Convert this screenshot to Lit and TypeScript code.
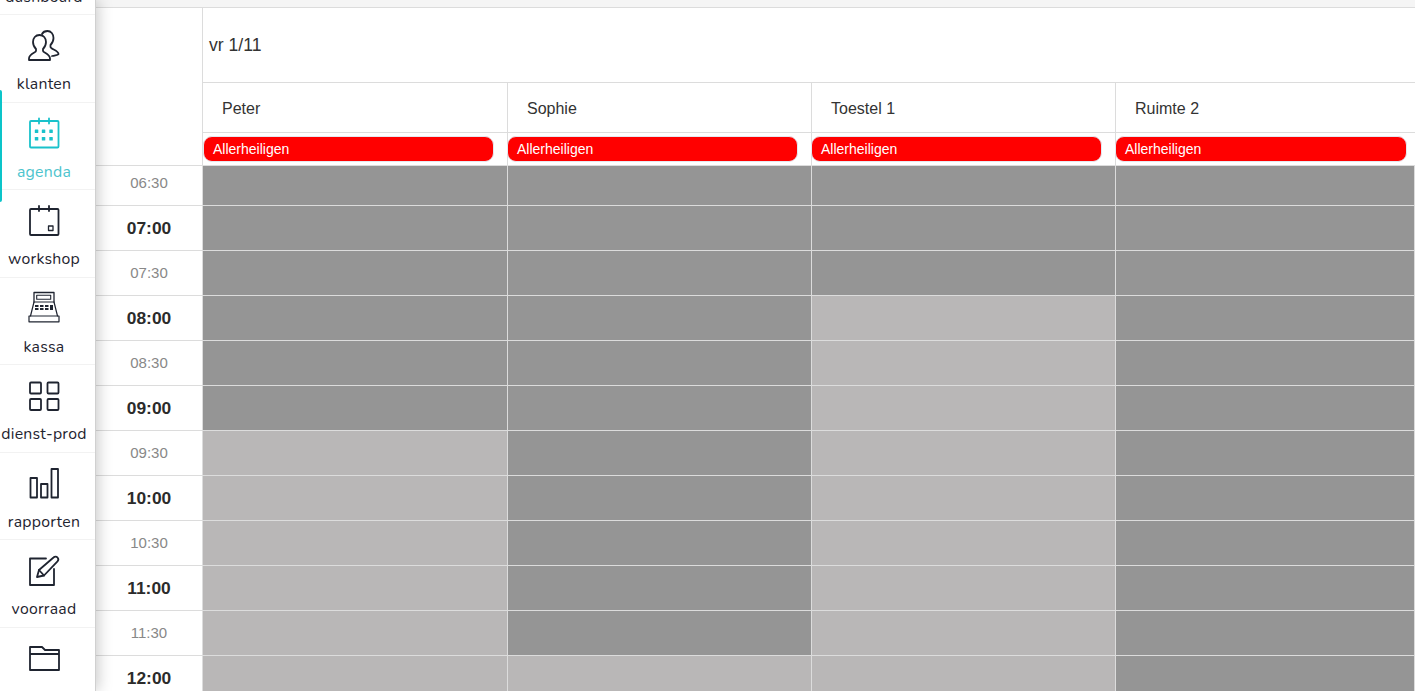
import { LitElement, html, css, svg } from "lit";
import { customElement } from "lit/decorators.js";

const icons: Record<string, unknown> = {
  dashboard: svg``,
  klanten: svg`<path d="M11.500 5C7.500 5 5 8 5 12c0 3 1.500 5.500 3 7v2c0 1.500-7 3-7 7.500V30h21v-1.500c0-4.500-7-6-7-7.500v-2c1.500-1.500 3-4 3-7 0-4-2.500-7-6.500-7z"/><path d="M14 4c1-2 3-3 5.500-3 3.500 0 6 3 6 7 0 3-1.500 5.500-3 7v2c0 2 8 3.500 8 7 0 1-2.500 1-6.500 2"/>`,
  agenda: svg`<rect x="2" y="3" width="28.500" height="26.500" rx="1"/><path d="M11 .5v5M21 .5v5"/><g fill="currentColor" stroke="none"><rect x="6.800" y="11.500" width="3.500" height="3.500" rx=".6"/><rect x="13.800" y="11.500" width="3.500" height="3.500" rx=".6"/><rect x="21.300" y="11.500" width="3.500" height="3.500" rx=".6"/><rect x="6.800" y="19" width="3.500" height="3.500" rx=".6"/><rect x="13.800" y="19" width="3.500" height="3.500" rx=".6"/><rect x="21.300" y="19" width="3.500" height="3.500" rx=".6"/></g>`,
  workshop: svg`<rect x="2" y="4" width="28.500" height="26" rx="1"/><path d="M11 1v5M21 1v5"/><rect x="20.500" y="21" width="4.500" height="4.500" stroke-width="1.300"/>`,
  kassa: svg`<path d="M6 9V-.5h20V9" stroke-width="1.300"/><rect x="8.700" y="2.300" width="14" height="4" stroke-width="1.100"/><path d="M6 9h20M6 9 2.500 23M26 9l3.500 14" stroke-width="1.200"/><rect x="1" y="23" width="30" height="5.800" stroke-width="1.200"/><g fill="currentColor" stroke="none"><rect x="7" y="12" width="3.500" height="2"/><rect x="12" y="12" width="3.500" height="2"/><rect x="17" y="12" width="3.500" height="2"/><rect x="22" y="12" width="3" height="5"/><rect x="7" y="15" width="3.500" height="2"/><rect x="12" y="15" width="3.500" height="2"/><rect x="17" y="15" width="3.500" height="2"/></g>`,
  dienst: svg`<rect x="2" y="2.500" width="11" height="11" rx="1"/><rect x="19.500" y="2.500" width="11" height="11" rx="1"/><rect x="2" y="19" width="11" height="11" rx="1"/><rect x="19.500" y="19" width="11" height="11" rx="1"/>`,
  rapporten: svg`<rect x="2.500" y="10" width="6.500" height="19.500"/><rect x="13" y="16" width="6.500" height="13.500"/><rect x="23.500" y="1" width="6.500" height="28.500"/>`,
  voorraad: svg`<path d="M18 3.500H2V30h24V14"/><path d="M9 22l2-7L25.500 2.500c1.200-1.200 3-1.200 4 0s1 2.800 0 3.800L16 20.500z"/><path d="M11 15l5 5.500"/>`,
  producten: svg`<path d="M2 27V4h12l3 3h14v20zM2 11h29"/>`,
};

const NAV = [
  { k: "dashboard", t: "dashboard" },
  { k: "klanten", t: "klanten" },
  { k: "agenda", t: "agenda", active: true },
  { k: "workshop", t: "workshop" },
  { k: "kassa", t: "kassa" },
  { k: "dienst", t: "dienst-prod" },
  { k: "rapporten", t: "rapporten" },
  { k: "voorraad", t: "voorraad" },
  { k: "producten", t: "bestanden" },
];

const TIMES = ["06:30", "07:00", "07:30", "08:00", "08:30", "09:00", "09:30", "10:00", "10:30", "11:00", "11:30", "12:00"];
const COLS = ["Peter", "Sophie", "Toestel 1", "Ruimte 2"];
// first free row per column: before it the cell is closed (dark)
const FREE_FROM = [6, 11, 3, 99];

@customElement("app-root")
export class AppRoot extends LitElement {
  static styles = css`
    :host {
      display: flex;
      width: 1415px;
      height: 691px;
      overflow: hidden;
      background: #f5f5f5;
      font-family: "Liberation Sans", Arial, sans-serif;
      color: #333;
      position: relative;
    }
    .side {
      flex: 0 0 96px;
      width: 96px;
      box-sizing: border-box;
      height: 691px;
      background: #fff;
      border-right: 1px solid #d0d0d0;
      box-shadow: 2px 0 14px rgba(0, 0, 0, 0.22);
      position: relative;
      z-index: 2;
      overflow: hidden;
    }
    .nav {
      margin-top: -72.5px;
      display: grid;
      grid-template-columns: 95px;
      grid-auto-rows: 87.5px;
    }
    .item {
      display: flex;
      flex-direction: column;
      align-items: center;
      border-bottom: 1px solid #f2f2f2;
      box-sizing: border-box;
      padding: 15px 7px 0 0;
      color: #1f2430;
      font-family: "Nunito", "Lato", "Noto Sans", sans-serif;
      font-size: 15.8px;
      letter-spacing: 0.25px;
      white-space: nowrap;
    }
    .item svg {
      width: 32px;
      height: 32px;
      flex: none;
      overflow: visible;
      fill: none;
      stroke: currentColor;
      stroke-width: 1.8;
      stroke-linejoin: round;
      stroke-linecap: round;
    }
    .item span {
      margin-top: 12.2px;
      line-height: 20px;
    }
    .item:last-child span {
      margin-top: 14px;
    }
    .item.active {
      color: #4cc4cd;
    }
    .item.active svg {
      color: #19c2cb;
    }
    .bar {
      position: absolute;
      left: 0;
      top: 90px;
      width: 2px;
      height: 112px;
      background: #0cc4c9;
      border-radius: 0 2px 2px 0;
    }
    .main {
      flex: 1;
      min-width: 0;
      padding-top: 7px;
    }
    .grid {
      display: grid;
      grid-template-columns: 107px 305px 304px 304px 1fr;
      grid-template-rows: 75px 50px 33px repeat(12, auto);
      background: #fff;
      border-top: 1px solid #dcdcdc;
    }
    .corner {
      grid-row: 1 / span 3;
      border-right: 1px solid #dcdcdc;
      border-bottom: 1px solid #dcdcdc;
    }
    .date {
      grid-column: 2 / -1;
      display: flex;
      align-items: center;
      padding-left: 6px;
      border-bottom: 1px solid #dcdcdc;
      font-size: 17.6px;
      box-sizing: border-box;
    }
    .name {
      display: flex;
      align-items: center;
      padding-left: 19px;
      padding-top: 2px;
      font-size: 16px;
      border-right: 1px solid #dcdcdc;
      border-bottom: 1px solid #dcdcdc;
      box-sizing: border-box;
      min-width: 0;
    }
    .hol {
      border-right: 1px solid #dcdcdc;
      border-bottom: 1px solid #dcdcdc;
      padding: 3px 13px 3px 0;
      box-sizing: border-box;
      min-width: 0;
    }
    .hol.end {
      padding-right: 8px;
    }
    .hol + .hol .pill {
      margin-left: -1px;
    }
    .pill {
      height: 26px;
      box-sizing: border-box;
      background: #ff0000;
      border: 1px solid #e4e8f0;
      border-radius: 9px;
      color: #fff;
      font-size: 14px;
      line-height: 24px;
      padding-left: 9px;
    }
    .end {
      border-right: none;
    }
    .time {
      height: 45px;
      display: flex;
      align-items: center;
      justify-content: center;
      box-sizing: border-box;
      border-right: 1px solid #dcdcdc;
      border-bottom: 1px solid #dcdcdc;
      color: #888;
      font-size: 15px;
      padding-bottom: 1px;
    }
    .time.hour {
      color: #2b2b2b;
      font-weight: 700;
      font-size: 17.4px;
      padding-bottom: 0;
    }
    .time.first {
      padding-bottom: 6px;
    }
    .time.first,
    .cell.first {
      height: 40px;
    }
    .cell {
      height: 45px;
      box-sizing: border-box;
      border-right: 1px solid #dcdcdc;
      border-bottom: 1px solid #dcdcdc;
      background: #959595;
    }
    .cell.free {
      background: #b9b7b7;
    }
  `;

  render() {
    return html`
      <aside class="side">
        <nav class="nav">
          ${NAV.map(
            (n) => html`<div class="item ${n.active ? "active" : ""}">
              <svg viewBox="0 0 32 32">${icons[n.k]}</svg>
              <span>${n.t}</span>
            </div>`,
          )}
        </nav>
        <div class="bar"></div>
      </aside>
      <main class="main">
        <div class="grid">
          <div class="corner"></div>
          <div class="date">vr 1/11</div>
          ${COLS.map((c, i) => html`<div class="name ${i === 3 ? "end" : ""}">${c}</div>`)}
          ${COLS.map((_, i) => html`<div class="hol ${i === 3 ? "end" : ""}"><div class="pill">Allerheiligen</div></div>`)}
          ${TIMES.map(
            (t, r) => html`
              <div class="time ${t.endsWith("00") ? "hour" : ""} ${r === 0 ? "first" : ""}">${t}</div>
              ${COLS.map(
                (_, c) =>
                  html`<div class="cell ${r >= FREE_FROM[c] ? "free" : ""} ${r === 0 ? "first" : ""} ${c === 3 ? "end" : ""}"></div>`,
              )}
            `,
          )}
        </div>
      </main>
    `;
  }
}
